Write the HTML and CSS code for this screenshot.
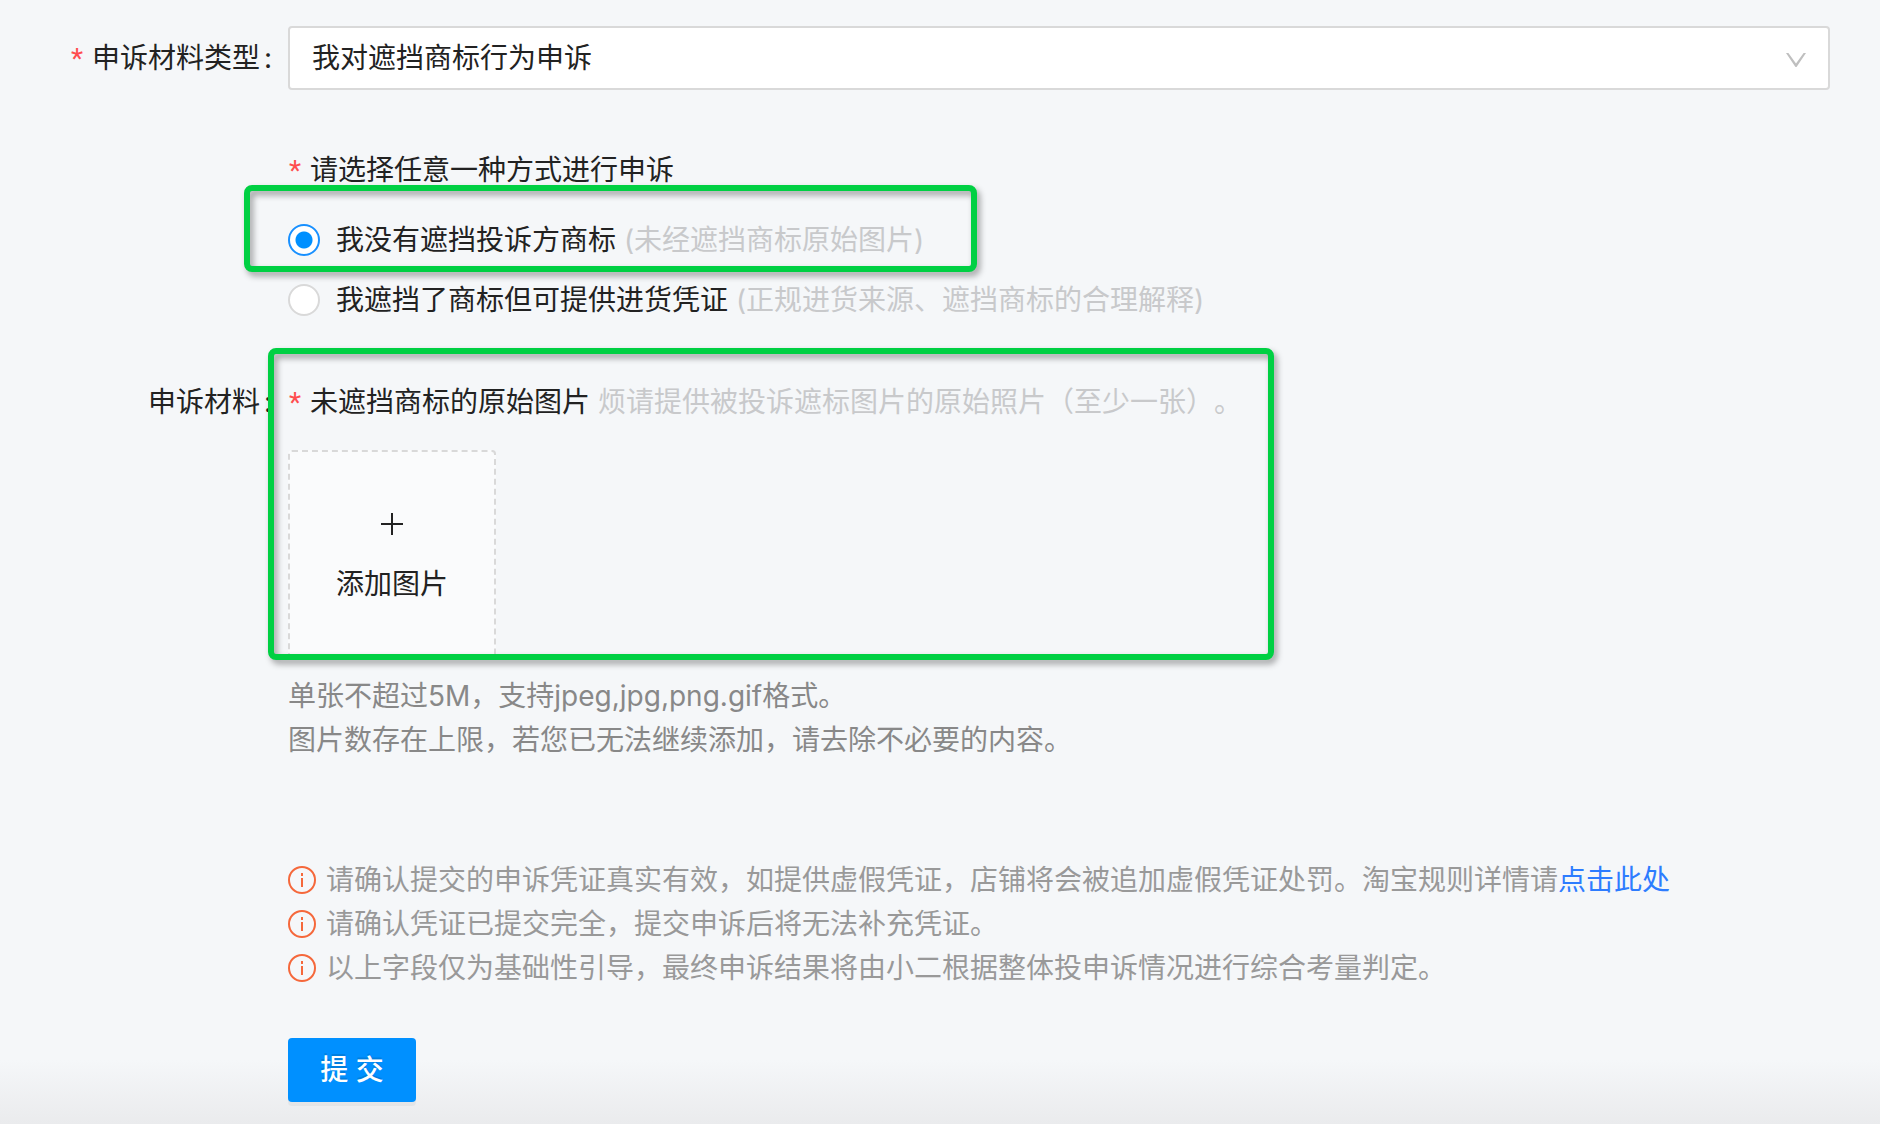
FILE: index.html
```html
<!DOCTYPE html>
<html lang="zh-CN">
<head>
<meta charset="utf-8">
<meta name="viewport" content="width=device-width, initial-scale=1">
<title>申诉</title>
<link rel="stylesheet" href="styles.css">
</head>
<body>
<form class="appeal">
  <div class="row">
    <label class="row-label" for="material-type"><span class="required">*</span>申诉材料类型<span class="colon">:</span></label>
    <div class="select">
      <select class="select-input" id="material-type">
        <option>我对遮挡商标行为申诉</option>
      </select>
      <svg class="select-arrow" viewBox="0 0 20 14" aria-hidden="true"><path d="M0 0h2.4L10 10.6 17.600 0H20L10.900 13.400q-.9 1.200-1.800 0z"/></svg>
    </div>
  </div>

  <fieldset class="row methods">
    <legend class="methods-title"><span class="required">*</span>请选择任意一种方式进行申诉</legend>
    <div class="options">
      <label class="option option-marked">
        <input class="radio" type="radio" name="method" checked>
        <span>我没有遮挡投诉方商标 <span class="hint">(未经遮挡商标原始图片)</span></span>
      </label>
      <label class="option">
        <input class="radio" type="radio" name="method">
        <span>我遮挡了商标但可提供进货凭证 <span class="hint">(正规进货来源、遮挡商标的合理解释)</span></span>
      </label>
    </div>
  </fieldset>

  <div class="row materials">
    <div class="row-label">申诉材料<span class="colon">:</span></div>
    <div>
      <div class="upload">
        <div><span class="required">*</span>未遮挡商标的原始图片 <span class="hint">烦请提供被投诉遮标图片的原始照片（至少一张）。</span></div>
        <button class="upload-button" type="button">
          <svg class="upload-icon" viewBox="0 0 28 28" aria-hidden="true"><path d="M14 3v22M3 14h22"/></svg>
          添加图片
        </button>
      </div>
      <div class="help">
        <div>单张不超过5M，支持jpeg,jpg,png.gif格式。</div>
        <div>图片数存在上限，若您已无法继续添加，请去除不必要的内容。</div>
      </div>
    </div>
  </div>

  <div class="footer">
    <ul class="notices">
      <li class="notice">
        <svg class="notice-icon" viewBox="0 0 28 28" aria-hidden="true"><circle cx="14" cy="14" r="13"/><path d="M14 12v9M14 7v3"/></svg>
        <span>请确认提交的申诉凭证真实有效，如提供虚假凭证，店铺将会被追加虚假凭证处罚。淘宝规则详情请<a class="link" href="#">点击此处</a></span>
      </li>
      <li class="notice">
        <svg class="notice-icon" viewBox="0 0 28 28" aria-hidden="true"><circle cx="14" cy="14" r="13"/><path d="M14 12v9M14 7v3"/></svg>
        <span>请确认凭证已提交完全，提交申诉后将无法补充凭证。</span>
      </li>
      <li class="notice">
        <svg class="notice-icon" viewBox="0 0 28 28" aria-hidden="true"><circle cx="14" cy="14" r="13"/><path d="M14 12v9M14 7v3"/></svg>
        <span>以上字段仅为基础性引导，最终申诉结果将由小二根据整体投申诉情况进行综合考量判定。</span>
      </li>
    </ul>
    <button class="submit" type="submit">提 交</button>
  </div>
</form>
</body>
</html>
```
FILE: styles.css
```css
* {
  box-sizing: border-box;
}

body {
  margin: 0;
  min-height: 100vh;
  background: linear-gradient(to top, #eaebed, #f5f7f9 64px);
  color: #222;
  font: 28px/44px Inter, "Noto Sans CJK SC", sans-serif;
  text-spacing-trim: space-all;
}

button,
select {
  font: inherit;
  color: inherit;
}

.appeal {
  padding: 26px 50px 22px 0;
}

.row {
  display: grid;
  grid-template-columns: 288px minmax(0, 1fr);
}

.row-label {
  align-self: center;
  text-align: right;
  white-space: nowrap;
}

.colon {
  display: inline-block;
  width: 8px;
  margin: 0 16px 0 4px;
  line-height: 28px;
  text-align: center;
}

.required {
  display: inline-block;
  width: 14px;
  margin-right: 8px;
  color: #ff4d4f;
  font-family: Roboto, sans-serif;
  line-height: 28px;
  text-align: center;
}

.hint {
  color: #c8c9cb;
}

/* Material type */
.select {
  position: relative;
}

.select-input {
  display: block;
  width: 100%;
  height: 64px;
  padding: 0 64px 0 22px;
  border: 2px solid #d9d9d9;
  border-radius: 4px;
  background: #fff;
  appearance: none;
}

.select-arrow {
  position: absolute;
  top: 27px;
  right: 24px;
  width: 20px;
  height: 14px;
  fill: #bfbfbf;
  pointer-events: none;
}

/* Appeal method */
.methods {
  margin: 58px 0 0;
  padding: 0 0 0 288px;
  border: 0;
  display: block;
}

.methods-title {
  padding: 0;
}

.options {
  display: flex;
  flex-direction: column;
  align-items: flex-start;
  gap: 16px;
  padding-top: 26px;
}

.option {
  position: relative;
  display: flex;
  align-items: center;
  gap: 16px;
}

.radio {
  flex: none;
  width: 32px;
  height: 32px;
  margin: 0;
  border: 2px solid #d9d9d9;
  border-radius: 50%;
  background: #fff;
  appearance: none;
}

.radio:checked {
  border-color: #1890ff;
  background: radial-gradient(circle, #0090ff 8px, #fff 9px);
}

/* Green marker frames over the form */
.option-marked::after,
.upload::after {
  content: "";
  position: absolute;
  border: 6px solid #00d043;
  border-radius: 8px;
  filter: drop-shadow(3px 4px 3px rgba(0, 0, 0, 0.36));
  pointer-events: none;
}

.option-marked::after {
  inset: -33px -53px -10px -44px;
}

.upload::after {
  inset: -32px -32px -2px -20px;
}

/* Upload */
.materials {
  margin-top: 58px;
}

.materials .row-label {
  align-self: start;
}

.upload {
  position: relative;
  width: fit-content;
}

.upload-button {
  display: flex;
  flex-direction: column;
  align-items: center;
  gap: 24px;
  width: 208px;
  height: 208px;
  margin-top: 26px;
  padding: 58px 0 0;
  border: 2px dashed #d9d9d9;
  border-radius: 4px;
  background: #fafbfc;
}

.upload-icon {
  width: 28px;
  height: 28px;
  fill: none;
  stroke: #222;
  stroke-width: 2;
}

.help {
  margin-top: 16px;
  color: #888;
}

/* Notices and submit */
.footer {
  padding: 96px 0 0 288px;
}

.notices {
  margin: 0 0 48px;
  padding: 0;
  list-style: none;
  color: #999;
}

.notice {
  display: flex;
  gap: 10px;
}

.notice-icon {
  flex: none;
  width: 28px;
  height: 28px;
  margin-top: 8px;
  fill: none;
  stroke: #f5683b;
  stroke-width: 2;
}

.link {
  color: #2d7cff;
  text-decoration: none;
}

.submit {
  display: block;
  width: 128px;
  height: 64px;
  padding: 0;
  border: 0;
  border-radius: 4px;
  background: #0090ff;
  color: #fff;
  font-weight: 500;
  text-shadow: 0 -2px 0 rgba(0, 0, 0, 0.12);
  box-shadow: 0 4px 0 rgba(0, 0, 0, 0.04);
}
```
